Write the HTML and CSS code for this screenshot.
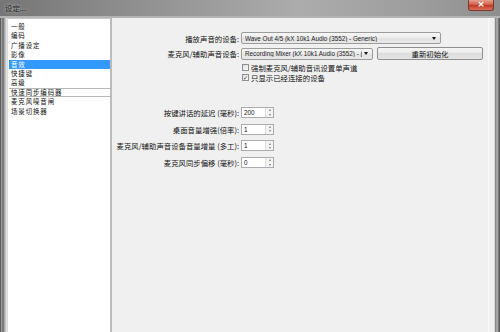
FILE: index.html
```html
<!DOCTYPE html>
<html>
	<head>
		<meta charset="utf-8">
		<link rel="stylesheet" href="styles.css">
	</head>
	<body>
		<div class="window">
			<div class="titlebar">
				<span class="title">设定...</span>
				<span class="close">×</span>
			</div>
			<div class="main">
				<div class="frame-left"></div>
				<div class="client">
					<ul class="nav">
						<li>一般</li>
						<li>编码</li>
						<li>广播设定</li>
						<li>影像</li>
						<li class="selected">音效</li>
						<li>快捷键</li>
						<li>高级</li>
						<li class="focused">快速同步编码器</li>
						<li>麦克风噪音闸</li>
						<li>场景切换器</li>
					</ul>
					<div class="panel">
						<div class="row row-first">
							<span class="lbl">播放声音的设备:</span>
							<div class="combo combo-wide"><span>Wave Out 4/5 (kX 10k1 Audio (3552) - Generic)</span><i class="arrow"></i></div>
						</div>
						<div class="row row-second">
							<span class="lbl">麦克风/辅助声音设备:</span>
							<div class="combo combo-narrow"><span>Recording Mixer (kX 10k1 Audio (3552) - (</span><i class="arrow"></i></div>
							<button class="btn">重新初始化</button>
						</div>
						<div class="row row-check row-check-first">
							<span class="lbl"></span>
							<span class="box"></span><span class="check-text">强制麦克风/辅助音讯设置单声道</span>
						</div>
						<div class="row row-check">
							<span class="lbl"></span>
							<span class="box on">✓</span><span class="check-text">只显示已经连接的设备</span>
						</div>

						<div class="spins">
							<div class="row row-spin">
								<span class="lbl">按键讲话的延迟 (毫秒):</span>
								<div class="spin"><span class="val">200</span><span class="arrows"><i class="up"></i><i class="down"></i></span></div>
							</div>
							<div class="row row-spin">
								<span class="lbl">桌面音量增强(倍率):</span>
								<div class="spin"><span class="val">1</span><span class="arrows"><i class="up"></i><i class="down"></i></span></div>
							</div>
							<div class="row row-spin">
								<span class="lbl">麦克风/辅助声音设备音量增量 (多工):</span>
								<div class="spin"><span class="val">1</span><span class="arrows"><i class="up"></i><i class="down"></i></span></div>
							</div>
							<div class="row row-spin">
								<span class="lbl">麦克风同步偏移 (毫秒):</span>
								<div class="spin"><span class="val">0</span><span class="arrows"><i class="up"></i><i class="down"></i></span></div>
							</div>
						</div>
					</div>
				</div>
				<div class="frame-right"></div>
			</div>
		</div>
	</body>
</html>
```

FILE: styles.css
```css
body {
	margin: 0;
	background-color: #8a8a8a;
	font-family: "Noto Sans CJK SC", sans-serif;
	font-size: 7.4px;
	color: #111;
}
.window {
	display: flex;
	flex-direction: column;
	width: 500px;
	height: 332px;
	overflow: hidden;
}
.titlebar {
	display: flex;
	align-items: flex-start;
	height: 16px;
	background: linear-gradient(to right, #767676, #929292 30%, #acacac 60%, #9c9c9c 85%, #8e8e8e);
	border-bottom: 2px solid #b4b4b4;
}
.title {
	padding-left: 5px;
	line-height: 16px;
	color: #1a1a1a;
	text-shadow: 0 0 3px #d8d8d8;
}
.close {
	margin-left: auto;
	margin-right: 6px;
	width: 26px;
	height: 11px;
	box-sizing: border-box;
	border: 1px solid #7a3a30;
	border-top: none;
	border-radius: 0 0 3px 3px;
	background: linear-gradient(#e6a090, #d0604c 45%, #c03c28 55%, #d8705c);
	color: #fff;
	font-family: "DejaVu Sans", sans-serif;
	font-size: 9px;
	font-weight: bold;
	line-height: 9px;
	text-align: center;
}
.main {
	display: flex;
	flex-grow: 1;
}
.frame-left {
	width: 7px;
	background: linear-gradient(to right, #5e5e5e 0 1px, #9a9a9a 1px 2px, #7c7c7c 2px 4px, #a6a6a6 4px 5px, #c4c4c4 5px 6px, #e4e4e4 6px 7px);
}
.frame-right {
	width: 6px;
	background: linear-gradient(to right, #d8d8d8 0 1px, #8a8a8a 1px 2px, #a4a4a4 2px 4px, #7a7a7a 4px 5px, #5e5e5e 5px 6px);
}
.client {
	display: flex;
	flex-grow: 1;
	background-color: #f0f0f0;
}
.nav {
	list-style: none;
	margin: 0;
	padding: 3px 0 0 1px;
	width: 101px;
	background-color: #fff;
	border-left: 1px solid #dadada;
	border-top: 1px solid #c8c8c8;
	font-size: 6.45px;
	letter-spacing: 0.9px;
}
.nav li {
	height: 9.4px;
	line-height: 9.4px;
	padding-left: 2px;
}
.nav .selected {
	background-color: #3399ff;
	color: #fff;
}
.nav .focused {
	box-shadow: inset 0 1px #b8b8b8, inset 0 -1px #b8b8b8;
}
.panel {
	flex-grow: 1;
	padding-top: 14px;
	border-left: 2px solid #bcbcbc;
	border-right: 1px solid #fafafa;
	margin-right: 5px;
}
.row {
	display: flex;
	align-items: center;
}
.lbl {
	width: 127px;
	margin-right: 2px;
	text-align: right;
	white-space: nowrap;
	flex-shrink: 0;
}
.row-first {
	height: 12px;
}
.row-second {
	height: 13px;
	margin-top: 3px;
}
.row-check {
	height: 10px;
}
.row-check-first {
	margin-top: 2.5px;
}
.combo {
	display: flex;
	align-items: center;
	height: 12px;
	box-sizing: border-box;
	border: 1px solid #9c9c9c;
	border-radius: 2px;
	background: linear-gradient(#f6f6f6, #ececec 50%, #e2e2e2 50%, #e8e8e8);
	font-family: "Liberation Sans", sans-serif;
	font-size: 6.3px;
	color: #222;
	padding-left: 3px;
	overflow: hidden;
	white-space: nowrap;
}
.combo span {
	flex-grow: 1;
	overflow: hidden;
}
.combo-wide {
	width: 200px;
}
.combo-narrow {
	width: 132px;
}
.arrow {
	flex-shrink: 0;
	width: 0;
	height: 0;
	margin: 0 4px 0 2px;
	border-left: 2.5px solid transparent;
	border-right: 2.5px solid transparent;
	border-top: 3px solid #111;
}
.btn {
	margin-left: 4px;
	width: 106px;
	height: 13px;
	padding: 0;
	box-sizing: border-box;
	border: 1px solid #8e8e8e;
	border-radius: 2px;
	background: linear-gradient(#f4f4f4, #ebebeb 50%, #dddddd 50%, #e4e4e4);
	font-family: "Noto Sans CJK SC", sans-serif;
	font-size: 7.4px;
	color: #111;
	line-height: 11px;
}
.box {
	width: 7px;
	height: 7px;
	margin-left: 1px;
	box-sizing: border-box;
	border: 1px solid #8f8f8f;
	background: linear-gradient(135deg, #dcdcdc, #fbfbfb);
	font-family: "DejaVu Sans", sans-serif;
	font-size: 6px;
	line-height: 5px;
	text-align: center;
	color: #2b3a5a;
	overflow: hidden;
}
.check-text {
	margin-left: 2px;
}
.spins {
	display: flex;
	flex-direction: column;
	gap: 5.7px;
	margin-top: 24.5px;
}
.row-spin {
	height: 11px;
}
.spin {
	display: flex;
	width: 33px;
	height: 11px;
	box-sizing: border-box;
	border: 1px solid #abadb3;
	background-color: #fff;
}
.val {
	flex-grow: 1;
	padding-left: 2px;
	font-family: "Liberation Sans", sans-serif;
	font-size: 6.3px;
	line-height: 9px;
}
.arrows {
	display: flex;
	flex-direction: column;
	justify-content: space-around;
	align-items: center;
	width: 7px;
	border-left: 1px solid #dcdcdc;
	background-color: #f2f2f2;
}
.arrows i {
	width: 0;
	height: 0;
	border-left: 1.5px solid transparent;
	border-right: 1.5px solid transparent;
}
.arrows .up {
	border-bottom: 2px solid #7a7a7a;
}
.arrows .down {
	border-top: 2px solid #7a7a7a;
}
```
